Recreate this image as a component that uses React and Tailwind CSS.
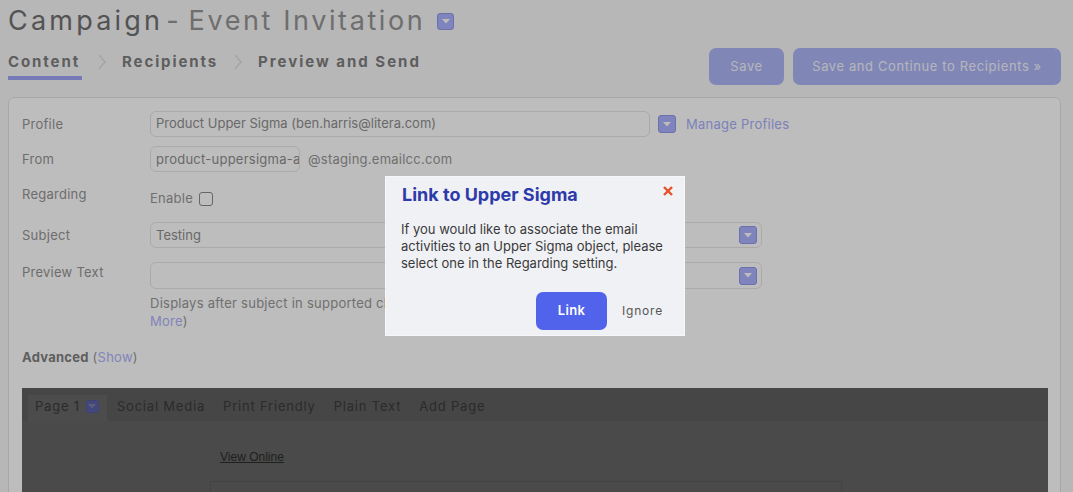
import React from "react";

function Drop({ size = 18, bg = "bg-[#adb2fe]", border = "border-[#9298e8]", tri = "#ffffff" }) {
  return (
    <span
      className={`flex shrink-0 items-center justify-center rounded-[3px] border ${bg} ${border}`}
      style={{ width: size, height: size }}
    >
      <svg width="8" height="5" viewBox="0 0 8 5">
        <polygon points="0,0 8,0 4,4.5" fill={tri} />
      </svg>
    </span>
  );
}

function Chevron() {
  return (
    <svg width="10" height="16" viewBox="0 0 10 16" className="mx-[15px] shrink-0">
      <polyline points="2,1 8,8 2,15" fill="none" stroke="#dcdcdc" strokeWidth="1.3" />
    </svg>
  );
}

export default function App() {
  return (
    <div className="relative h-[492px] w-full overflow-hidden bg-[#f7f7f8] font-['Inter',sans-serif]">
      <div className="pl-2 pr-3">
        {/* Title */}
        <div className="flex h-[38px] items-center pt-[2px]">
          <span className="text-[27px] font-normal tracking-[3.2px] text-[#707070] leading-none">Campaign</span>
          <span className="ml-[3px] text-[27px] tracking-[2px] text-[#959595] leading-none">-</span>
          <span className="ml-[8px] text-[27px] tracking-[2.6px] text-[#959595] leading-none">Event Invitation</span>
          <span className="ml-[12px] mt-[2px] flex">
            <Drop size={17} />
          </span>
        </div>

        {/* Tabs + buttons */}
        <div className="flex items-start justify-between">
          <div className="flex items-start pt-[14px]">
            <div className="flex flex-col">
              <span className="text-[15px] font-bold leading-[20px] tracking-[1.9px] text-[#7f7f7f]">Content</span>
              <span className="mt-[4px] h-[4px] w-[74px] bg-[#a0a6f8]" />
            </div>
            <span className="mt-[2px]"><Chevron /></span>
            <span className="text-[15px] font-bold leading-[20px] tracking-[1.9px] text-[#7f7f7f]">Recipients</span>
            <span className="mt-[2px]"><Chevron /></span>
            <span className="text-[15px] font-bold leading-[20px] tracking-[2px] text-[#7f7f7f]">Preview and Send</span>
          </div>
          <div className="mt-[10px] flex gap-[9px]">
            <button className="h-[37px] w-[75px] rounded-[7px] bg-[#adb6f6] text-[13px] tracking-[0.6px] text-[#f4f5fd]">Save</button>
            <button className="h-[37px] w-[268px] rounded-[7px] bg-[#adb6f6] text-[13px] tracking-[0.6px] text-[#f4f5fd]">
              Save and Continue to Recipients »
            </button>
          </div>
        </div>

        {/* Panel */}
        <div className="mt-[12px] h-[420px] rounded-md border border-[#e2e2e2] bg-white pl-[13px] pr-[12px] pt-[13px]">
          <div className="flex flex-col text-[13px] tracking-[0.25px]">
            {/* Profile */}
            <div className="flex h-[26px] items-center">
              <span className="w-[128px] pt-[1px] text-[#949494]">Profile</span>
              <div className="flex h-[26px] w-[500px] items-center rounded-[6px] border border-[#e6e6e6] px-[5px] text-[#8e8e8e] tracking-normal">
                Product Upper Sigma (ben.harris@litera.com)
              </div>
              <span className="ml-[8px] flex"><Drop /></span>
              <span className="ml-[10px] pt-[2px] text-[#a8aefa]">Manage Profiles</span>
            </div>
            {/* From */}
            <div className="mt-[9px] flex h-[26px] items-center">
              <span className="w-[128px] pt-[1px] text-[#949494]">From</span>
              <input
                readOnly
                value="product-uppersigma-activities"
                className="h-[26px] w-[150px] rounded-[6px] border border-[#e6e6e6] bg-white pl-[5px] pr-0 text-[13px] text-[#8e8e8e] outline-none"
              />
              <span className="ml-[8px] pt-[1px] text-[#969696]">@staging.emailcc.com</span>
            </div>
            {/* Regarding */}
            <div className="mt-[9px] flex h-[32px] items-start">
              <span className="flex h-[26px] w-[128px] items-center pt-[1px] text-[#949494]">Regarding</span>
              <div className="mt-[5px] flex h-[26px] items-center">
                <span className="text-[#969696]">Enable</span>
                <span className="ml-[6px] h-[14px] w-[14px] rounded-[3px] border border-[#8a8a8a] bg-white" />
              </div>
            </div>
            {/* Subject */}
            <div className="mt-[9px] flex h-[26px] items-center">
              <span className="w-[128px] pt-[1px] text-[#949494]">Subject</span>
              <div className="flex h-[26px] w-[612px] items-center justify-between rounded-[6px] border border-[#e6e6e6] pl-[5px] pr-[4px] text-[#8e8e8e] tracking-normal">
                <span className="pt-[1px]">Testing</span>
                <Drop />
              </div>
            </div>
            {/* Preview Text */}
            <div className="mt-[14px] flex items-start">
              <span className="flex h-[21px] w-[128px] items-center pt-[1px] text-[#949494]">Preview Text</span>
              <div className="flex flex-col">
                <div className="flex h-[27px] w-[612px] items-center justify-end rounded-[6px] border border-[#e6e6e6] pr-[4px]">
                  <Drop />
                </div>
                <div className="mt-[5px] leading-[18px] text-[#979797]">
                  Displays after subject in supported clients. (<span className="text-[#aeb3fb]">Learn</span>
                  <br />
                  <span className="text-[#aeb3fb]">More</span>)
                </div>
              </div>
            </div>
            {/* Advanced */}
            <div className="mt-[18px] leading-[18px]">
              <span className="font-bold text-[#7f7f7f]">Advanced</span>{" "}
              <span className="text-[#979797]">(</span>
              <span className="text-[#aeb3fb]">Show</span>
              <span className="text-[#979797]">)</span>
            </div>
          </div>

          {/* Editor */}
          <div className="mt-[22px] h-[120px] bg-[#656565]">
            <div className="flex h-[33px] items-end bg-[#5f5f5f] pl-[6px] text-[13px] tracking-[0.8px] text-[#3a3a3a]">
              <div className="flex h-[26px] items-start bg-[#676767] pl-[7px] pr-[8px] pt-[2px]">
                <span className="leading-[18px]">Page 1</span>
                <span className="ml-[6px] mt-[3px] flex">
                  <Drop size={13} bg="bg-[#5c61a9]" border="border-[#555a9e]" tri="#7d7fa8" />
                </span>
              </div>
              <div className="flex h-[26px] items-start gap-[18px] pl-[10px] pt-[2px] leading-[18px]">
                <span>Social Media</span>
                <span>Print Friendly</span>
                <span>Plain Text</span>
                <span>Add Page</span>
              </div>
            </div>
            <div className="pl-[198px] pt-[27px] leading-[14px]">
              <span className="font-['Liberation_Sans',Arial,sans-serif] text-[12px] text-[#2a2a2a] underline">View Online</span>
            </div>
            <div className="ml-[188px] mt-[17px] h-[40px] w-[632px] border border-[#5b5b5b]" />
          </div>
        </div>
      </div>

      {/* Overlay */}
      <div className="absolute inset-0 z-10 bg-black/[0.26]" />

      {/* Modal */}
      <div className="absolute left-[385px] top-[176px] z-20 h-[160px] w-[300px] border border-[#f7f7fa] bg-[#f0f1f5] pl-[16px] pr-[15px]">
        <button className="absolute right-[11px] top-[9px]">
          <svg width="10" height="10" viewBox="0 0 10 10">
            <line x1="1" y1="1" x2="9" y2="9" stroke="#e6522c" strokeWidth="2.4" />
            <line x1="9" y1="1" x2="1" y2="9" stroke="#e6522c" strokeWidth="2.4" />
          </svg>
        </button>
        <div className="mt-[6px] text-[18px] font-bold leading-[24px] text-[#2d3aa9]">Link to Upper Sigma</div>
        <div className="-ml-[1px] mt-[14px] whitespace-nowrap text-[13px] leading-[17px] text-[#3a3a3a]">
          If you would like to associate the email
          <br />
          activities to an Upper Sigma object, please
          <br />
          select one in the Regarding setting.
        </div>
        <div className="mt-[20px] flex items-center justify-end gap-[15px] pr-[6px]">
          <button className="h-[38px] w-[71px] rounded-[7px] bg-[#5063ea] text-[13px] font-semibold tracking-[0.4px] text-white">
            Link
          </button>
          <button className="text-[12px] tracking-[0.8px] text-[#555555]">Ignore</button>
        </div>
      </div>
    </div>
  );
}
